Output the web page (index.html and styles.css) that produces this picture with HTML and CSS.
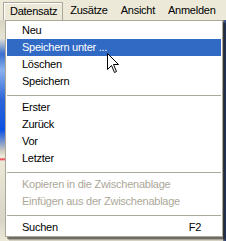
FILE: index.html
```html
<!DOCTYPE html>
<html>
<head>
<meta charset="utf-8">
<link rel="stylesheet" href="styles.css">
</head>
<body>
<div class="menubar">
  <div class="mb-item pressed">Datensatz</div>
  <div class="mb-item">Zusätze</div>
  <div class="mb-item">Ansicht</div>
  <div class="mb-item">Anmelden</div>
</div>
<div class="stage">
  <div class="left-strip"></div>
  <div class="dropdown">
    <div class="row">Neu</div>
    <div class="row active">Speichern unter ...</div>
    <div class="row">Löschen</div>
    <div class="row">Speichern</div>
    <div class="sep"></div>
    <div class="row">Erster</div>
    <div class="row">Zurück</div>
    <div class="row">Vor</div>
    <div class="row">Letzter</div>
    <div class="sep"></div>
    <div class="row disabled">Kopieren in die Zwischenablage</div>
    <div class="row disabled">Einfügen aus der Zwischenablage</div>
    <div class="sep"></div>
    <div class="row"><span>Suchen</span><span class="key">F2</span></div>
  </div>
  <div class="right-strip"></div>
</div>
<svg class="cursor" width="13" height="21" viewBox="0 0 13 21">
  <path d="M0.5,0.5 L0.5,16.5 L4.5,12.5 L7.5,19.5 L9.5,18.5 L6.5,11.5 L11.5,11.5 Z" fill="#fff" stroke="#000" stroke-width="1"/>
</svg>
</body>
</html>
```
FILE: styles.css
```css
html, body {
  margin: 0;
  padding: 0;
}
body {
  width: 226px;
  height: 241px;
  overflow: hidden;
  background: #ECE9D8;
  font-family: "Liberation Sans", Arial, sans-serif;
  font-size: 11px;
  letter-spacing: -0.25px;
  color: #000;
  position: relative;
}
.menubar {
  height: 20px;
  display: flex;
  align-items: flex-end;
  padding-left: 3px;
  box-sizing: border-box;
}
.mb-item {
  height: 18px;
  line-height: 17px;
  padding: 0 6px 0 7px;
  box-sizing: border-box;
}
.mb-item.pressed {
  border: 1px solid #ACA899;
  border-bottom: none;
  padding-left: 6px;
  padding-right: 5px;
  background: #ECE9D8;
  box-shadow: inset 1px 1px 0 #fff;
}
.stage {
  display: flex;
  height: 221px;
}
.left-strip {
  width: 5px;
  background: linear-gradient(#d8d4c4 0, #e8e4d4 18px, #3a6fd0 34px, #8ab0ee 50px, #2c64d8 80px, #0a52e4 110px, #c8c6c0 130px, #ece9d8 136px, #ece9d8 138px, #e23 139px, #ece9d8 141px, #d8d4c6 200px, #ece9d8 221px);
}
.dropdown {
  width: 218px;
  height: 217px;
  box-sizing: border-box;
  border: 1px solid #ACA899;
  background: #fff;
  padding: 1px;
  box-shadow: 2px 2px 0 rgba(0,0,0,0.35), 3px 3px 0 rgba(0,0,0,0.2), 4px 4px 0 rgba(0,0,0,0.1);
  position: relative;
  z-index: 1;
}
.row {
  height: 17px;
  line-height: 17px;
  padding: 0 20px 0 15px;
  display: flex;
  justify-content: space-between;
  white-space: nowrap;
}
.row.active {
  background: #316AC5;
  color: #fff;
}
.row.disabled {
  color: #ACA899;
}
.sep {
  height: 1px;
  background: #ACA899;
  margin: 5px 0 3px;
}
.right-strip {
  width: 3px;
  background: linear-gradient(90deg, #808080 0, #1f3e88 3px);
}
.cursor {
  position: absolute;
  left: 107px;
  top: 53px;
  z-index: 2;
}
```
